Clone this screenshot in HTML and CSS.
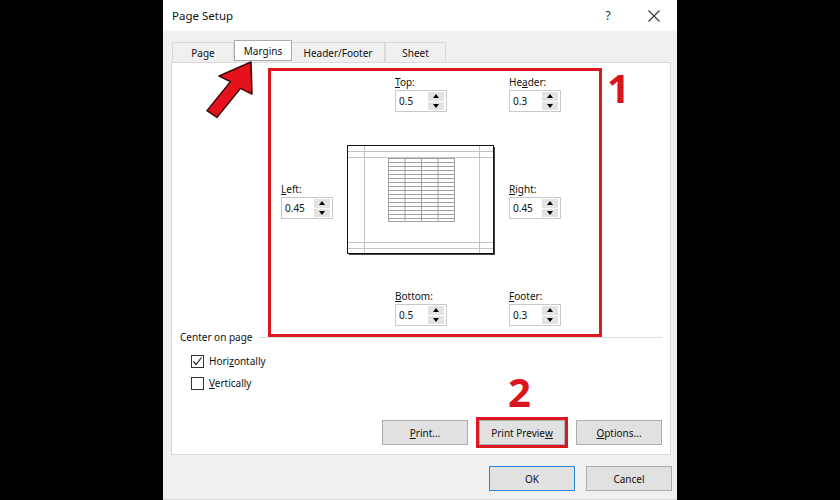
FILE: index.html
```html
<!DOCTYPE html>
<html>
<head>
<meta charset="utf-8">
<link rel="stylesheet" href="styles.css">
</head>
<body>
<div class="dialog">
  <div class="titlebar">
    <div class="title">Page Setup</div>
    <div class="tb-btn help">?</div>
    <div class="tb-btn close">
      <svg width="12" height="12" viewBox="0 0 12 12"><path d="M0.5 0.5 L11.5 11.5 M11.5 0.5 L0.5 11.5" stroke="#333" stroke-width="1.1" fill="none"/></svg>
    </div>
  </div>
  <div class="body">
    <div class="tabs">
      <div class="tab tab-page">Page</div>
      <div class="tab tab-margins active">Margins</div>
      <div class="tab tab-hf">Header/Footer</div>
      <div class="tab tab-sheet">Sheet</div>
    </div>
    <div class="panel">
      <div class="margins">
        <div class="annot-box"><span class="annot-num one">1</span></div>
        <div class="field c2 r1"><label><u>T</u>op:</label><div class="input"><span class="val">0.5</span><span class="spin"><i class="up"></i><i class="down"></i></span></div></div>
        <div class="field c3 r1"><label>He<u>a</u>der:</label><div class="input"><span class="val">0.3</span><span class="spin"><i class="up"></i><i class="down"></i></span></div></div>
        <div class="field c1 r2"><label><u>L</u>eft:</label><div class="input"><span class="val">0.45</span><span class="spin"><i class="up"></i><i class="down"></i></span></div></div>
        <div class="preview c2 r2">
          <svg width="148" height="110" viewBox="0 0 148 110">
            <g stroke="#c4c4c4" stroke-width="1" fill="none">
              <path d="M17.5 1 V108 M132.5 1 V108 M1 6.5 H146 M1 12.5 H146 M1 97.5 H146 M1 103.5 H146"/>
            </g>
            <g stroke="#a0a0a0" stroke-width="1" fill="none">
              <path d="M41.5 13 V76 M58 13 V76 M74.5 13 V76 M91 13 V76 M107.5 13 V76"/>
              <path d="M41 13.5 H108 M41 17.5 H108 M41 21.5 H108 M41 25.5 H108 M41 29.5 H108 M41 33.5 H108 M41 37.5 H108 M41 41.5 H108 M41 45.5 H108 M41 49.5 H108 M41 53.5 H108 M41 57.5 H108 M41 61.5 H108 M41 65.5 H108 M41 69.5 H108 M41 73.5 H108 M41 76.5 H108"/>
            </g>
            <rect x="0.5" y="0.5" width="146" height="108" fill="none" stroke="#111" stroke-width="1"/>
            <path d="M147.5 2 V110 M2 109.5 H148" stroke="#444" stroke-width="1"/>
          </svg>
        </div>
        <div class="field c3 r2"><label><u>R</u>ight:</label><div class="input"><span class="val">0.45</span><span class="spin"><i class="up"></i><i class="down"></i></span></div></div>
        <div class="field c2 r3"><label><u>B</u>ottom:</label><div class="input"><span class="val">0.5</span><span class="spin"><i class="up"></i><i class="down"></i></span></div></div>
        <div class="field c3 r3"><label><u>F</u>ooter:</label><div class="input"><span class="val">0.3</span><span class="spin"><i class="up"></i><i class="down"></i></span></div></div>
      </div>
      <div class="group">
        <div class="group-label"><span>Center on page</span><span class="group-line"></span></div>
        <div class="check-row">
          <span class="checkbox"><svg width="11" height="11" viewBox="0 0 11 11"><path d="M1.5 5.5 L4 8.5 L9.5 1.5" stroke="#222" stroke-width="1.2" fill="none"/></svg></span>
          <span>Hori<u>z</u>ontally</span>
        </div>
        <div class="check-row">
          <span class="checkbox"></span>
          <span><u>V</u>ertically</span>
        </div>
      </div>
      <div class="panel-buttons">
        <div class="btn"><u>P</u>rint...</div>
        <div class="btn btn-marked">Print Previe<u>w</u><span class="annot-num two">2</span></div>
        <div class="btn"><u>O</u>ptions...</div>
      </div>
    </div>
    <div class="footer">
      <div class="btn btn-default">OK</div>
      <div class="btn">Cancel</div>
    </div>
  </div>
  <svg class="arrow" width="60" height="75" viewBox="0 0 60 75">
    <polygon points="51,12 52,44 40.5,38.4 17,67.4 7,60.6 30.5,31.6 19,26" fill="#e3121b" stroke="#3a0606" stroke-width="1.5" stroke-linejoin="round"/>
  </svg>
</div>
</body>
</html>
```
FILE: styles.css
```css
html, body {
  margin: 0;
  padding: 0;
}
body {
  background: #000;
  width: 840px;
  height: 500px;
  display: flex;
  justify-content: center;
  overflow: hidden;
}
.dialog {
  position: relative;
  width: 514px;
  height: 500px;
  background: #f0f0f0;
  display: flex;
  flex-direction: column;
  font-family: "Noto Sans", "Open Sans", sans-serif;
  font-size: 10px;
  color: #000;
  box-sizing: border-box;
  border-bottom: 1px solid #d8d8d8;
}
.titlebar {
  height: 31px;
  background: #fff;
  display: flex;
  align-items: center;
  padding-left: 9px;
  flex: none;
}
.title {
  flex: 1;
  font-size: 11.5px;
  color: #111;
}
.tb-btn {
  width: 46px;
  height: 31px;
  display: flex;
  align-items: center;
  justify-content: center;
}
.help {
  font-size: 12px;
  color: #333;
  font-family: "Noto Sans", sans-serif;
}
.body {
  flex: 1;
  display: flex;
  flex-direction: column;
  padding: 9px 6px 0 8px;
}
.tabs {
  display: flex;
  align-items: flex-end;
  height: 22px;
  padding-left: 1px;
}
.tab {
  height: 20px;
  box-sizing: border-box;
  border: 1px solid #d9d9d9;
  border-bottom: none;
  display: flex;
  align-items: center;
  justify-content: center;
  background: #f0f0f0;
  color: #111;
}
.tab-page { width: 62px; }
.tab-margins { width: 58px; }
.tab-hf { width: 93px; }
.tab-sheet { width: 61px; }
.tab.active {
  height: 21px;
  margin-bottom: 1px;
  background: #fff;
  border: 1px solid #ababab;
}
.tab-hf { border-left: none; }
.panel {
  flex: 1;
  background: #fff;
  border: 1px solid #dadada;
  display: flex;
  flex-direction: column;
  padding: 0 8px 9px 8px;
}
.margins {
  position: relative;
  display: grid;
  grid-template-columns: 52px 148px 52px;
  grid-template-rows: 38px 110px 38px;
  column-gap: 14px;
  row-gap: 33px;
  width: max-content;
  margin: 11px 0 0 101px;
}
.c1 { grid-column: 1; }
.c2 { grid-column: 2; }
.c3 { grid-column: 3; }
.r1 { grid-row: 1; }
.r2 { grid-row: 2; }
.r3 { grid-row: 3; }
.field {
  width: 52px;
  justify-self: center;
  align-self: center;
}
.field label {
  display: block;
  line-height: 16px;
  color: #111;
}
.input {
  width: 52px;
  height: 22px;
  box-sizing: border-box;
  border: 1px solid #c8c8c8;
  background: #fff;
  display: flex;
}
.val {
  flex: 1;
  line-height: 20px;
  padding-left: 3px;
  color: #111;
}
.spin {
  width: 16px;
  margin: 1px 2px 1px 0;
  display: flex;
  flex-direction: column;
  gap: 1px;
}
.spin i {
  flex: 1;
  background: #e3e3e3;
  display: flex;
  align-items: center;
  justify-content: center;
}
.spin i::after {
  content: "";
  width: 0;
  height: 0;
  border-left: 3.5px solid transparent;
  border-right: 3.5px solid transparent;
}
.spin i.up::after { border-bottom: 4px solid #000; }
.spin i.down::after { border-top: 4px solid #000; }
.preview {
  width: 148px;
  height: 110px;
}
.preview svg { display: block; }
.annot-box {
  position: absolute;
  left: -13px;
  top: -6px;
  right: -41px;
  bottom: -11px;
  border: 3px solid #dc1720;
  pointer-events: none;
}
.annot-num {
  position: absolute;
  font-family: "Noto Sans", sans-serif;
  font-weight: 700;
  font-size: 40px;
  line-height: 40px;
  color: #d9141c;
}
.one {
  left: calc(100% + 8px);
  top: -3px;
}
.two {
  left: 28px;
  bottom: calc(100% + 9px);
}
.group {
  margin-top: 4px;
}
.group-label {
  display: flex;
  align-items: center;
  line-height: 14px;
  color: #111;
  gap: 4px;
}
.group-line {
  flex: 1;
  border-top: 1px solid #dcdcdc;
  margin-left: 2px;
}
.check-row {
  display: flex;
  align-items: center;
  height: 22px;
  padding-left: 11px;
  gap: 5px;
  color: #111;
}
.check-row:first-of-type { margin-top: 6px; }
.group .check-row:nth-child(2) { margin-top: 6px; }
.checkbox {
  width: 13px;
  height: 13px;
  box-sizing: border-box;
  border: 1px solid #333;
  background: #fff;
  display: flex;
  align-items: center;
  justify-content: center;
}
.panel-buttons {
  margin-top: auto;
  display: flex;
  justify-content: flex-end;
  gap: 11px;
}
.btn {
  position: relative;
  width: 86px;
  height: 25px;
  box-sizing: border-box;
  background: #e1e1e1;
  border: 1px solid #adadad;
  display: flex;
  align-items: center;
  justify-content: center;
  color: #111;
}
.btn-marked {
  outline: 3px solid #dc1720;
  outline-offset: 0px;
}
.footer {
  height: 44px;
  flex: none;
  display: flex;
  justify-content: flex-end;
  align-items: flex-start;
  padding-top: 11px;
  box-sizing: border-box;
  gap: 11px;
  margin-right: -1px;
}
.btn-default {
  border: 1px solid #2f86d6;
  box-shadow: inset 0 0 0 1px #e1e1e1;
}
.arrow {
  position: absolute;
  left: 37px;
  top: 50px;
}
```
